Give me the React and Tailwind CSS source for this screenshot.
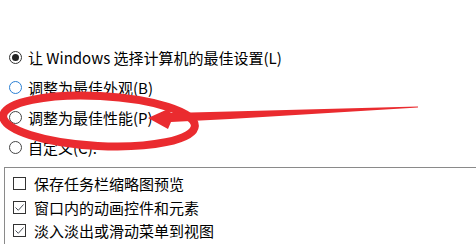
const font = { fontFamily: '"Noto Sans CJK SC", "Microsoft YaHei", sans-serif' }

function Radio({ state }) {
  if (state === 'checked') {
    return (
      <span className="w-[13px] h-[13px] rounded-full border border-[#333] flex items-center justify-center shrink-0">
        <span className="w-[7px] h-[7px] rounded-full bg-[#222]" />
      </span>
    )
  }
  const border = state === 'hover' ? 'border-[#2a7fd4]' : 'border-[#444]'
  return <span className={`w-[13px] h-[13px] rounded-full border ${border} shrink-0`} />
}

function Checkbox({ checked }) {
  return (
    <span className="w-[13px] h-[13px] border border-[#333] flex items-center justify-center shrink-0 bg-white">
      {checked && (
        <svg width="11" height="11" viewBox="0 0 11 11">
          <path d="M1.5 5.5 L4.3 8.3 L9.5 2.5" fill="none" stroke="#4a5058" strokeWidth="1" />
        </svg>
      )}
    </span>
  )
}

const radios = [
  { label: '让 Windows 选择计算机的最佳设置(L)', state: 'checked' },
  { label: '调整为最佳外观(B)', state: 'hover' },
  { label: '调整为最佳性能(P)', state: 'none' },
  { label: '自定义(C):', state: 'none' },
]

const checks = [
  { label: '保存任务栏缩略图预览', checked: false },
  { label: '窗口内的动画控件和元素', checked: true },
  { label: '淡入淡出或滑动菜单到视图', checked: true },
  { label: '滑动打开组合框', checked: true },
]

export default function App() {
  return (
    <div className="w-[476px] h-[244px] relative overflow-hidden bg-white text-black" style={font}>
      <div className="pt-[42px]">
        {radios.map((r) => (
          <div key={r.label} className="h-[30px] flex items-center pl-[9px] gap-[6px] text-[15px] leading-none">
            <Radio state={r.state} />
            <span>{r.label}</span>
          </div>
        ))}
        <div className="mt-[5px] ml-[4px] border-l border-t border-[#8a8a8a] pt-[4px] pl-[8px]">
          {checks.map((c) => (
            <div key={c.label} className="h-[23.5px] flex items-center gap-[8px] text-[15px] leading-none">
              <Checkbox checked={c.checked} />
              <span>{c.label}</span>
            </div>
          ))}
        </div>
      </div>

      <svg className="absolute inset-0 pointer-events-none" width="476" height="244" viewBox="0 0 476 244">
        <ellipse cx="99" cy="121" rx="96" ry="25" fill="none" stroke="#ea2b2f" strokeWidth="8" transform="rotate(3 99 121)" />
        <polygon
          points="148,118 168,109 171,113 230,111.5 418,106.6 418,107.4 230,119 171,122 168,129"
          fill="#ea2b2f"
        />
      </svg>
    </div>
  )
}
